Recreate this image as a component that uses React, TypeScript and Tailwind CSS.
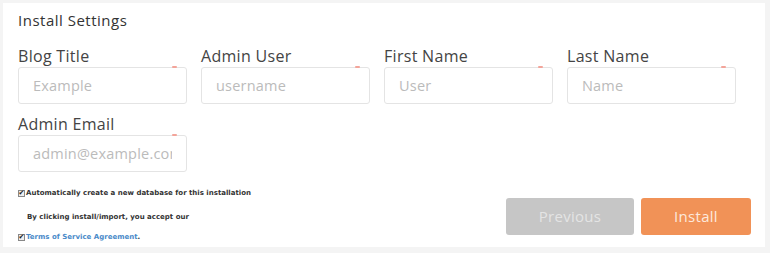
const fields = [
  { label: "Blog Title", placeholder: "Example" },
  { label: "Admin User", placeholder: "username" },
  { label: "First Name", placeholder: "User" },
  { label: "Last Name", placeholder: "Name" },
  { label: "Admin Email", placeholder: "admin@example.com" },
];

function Field({ label, placeholder }: { label: string; placeholder: string }) {
  return (
    <div className="flex flex-col w-[169px]">
      <label className="text-[16px] leading-[20px] tracking-[0.3px] text-[#444]">{label}</label>
      <div className="relative mt-[1px]">
        <input
          placeholder={placeholder}
          className="w-full h-[37px] border border-[#e4e4e4] rounded-[3px] px-[14px] text-[14.5px] tracking-[0.2px] text-[#555] placeholder:text-[#bbb] outline-none bg-white"
        />
        <span className="absolute top-[-1px] right-[10px] w-[5px] h-[2px] rounded-full bg-[#f3a49a]" />
      </div>
    </div>
  );
}

function Check() {
  return (
    <span className="inline-flex items-center justify-center w-[7px] h-[7px] border border-[#888] bg-[#eee] mr-[1px] text-[7px] leading-none text-[#222]">
      ✔
    </span>
  );
}

export default function App() {
  return (
    <div className="w-[770px] h-[253px] bg-[#f4f4f4] p-[3px] pr-[5px] pb-[6px] font-['Open_Sans',sans-serif]">
      <div className="bg-white h-full pl-[15px] pr-[14px] pt-[7px]">
        <h2 className="text-[15px] leading-[20px] tracking-[0.5px] text-[#333]">Install Settings</h2>
        <div className="grid grid-cols-[169px_169px_169px_169px] gap-x-[14px] gap-y-[10px] mt-[16px]">
          {fields.map((f) => (
            <Field key={f.label} {...f} />
          ))}
        </div>
        <div className="flex justify-between items-start mt-[16px]">
          <div className="text-[7px] font-bold text-[#333] font-['DejaVu_Sans',sans-serif]">
            <div className="flex items-center">
              <Check />
              Automatically create a new database for this installation
            </div>
            <div className="ml-[9px] mt-[13px]">By clicking install/import, you accept our</div>
            <div className="flex items-center mt-[10px]">
              <Check />
              <span className="text-[#4a8ac9]">Terms of Service Agreement</span>.
            </div>
          </div>
          <div className="flex gap-[7px] mt-[10px]">
            <button className="w-[128px] h-[37px] rounded-[3px] bg-[#c6c6c6] text-[#e4e4e4] text-[15px] tracking-[0.3px]">
              Previous
            </button>
            <button className="w-[110px] h-[37px] rounded-[3px] bg-[#f19257] text-[#fde9dc] text-[15px] tracking-[0.3px]">
              Install
            </button>
          </div>
        </div>
      </div>
    </div>
  );
}
